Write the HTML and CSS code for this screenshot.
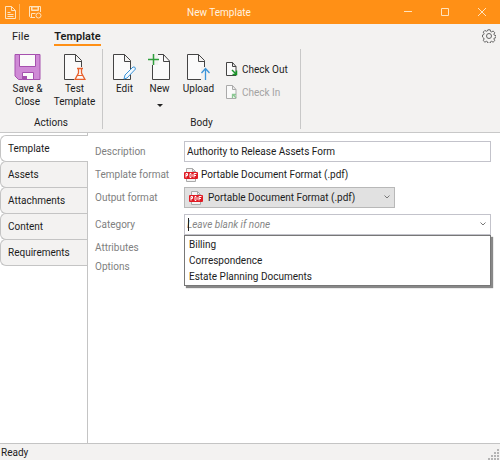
FILE: index.html
```html
<!DOCTYPE html>
<html lang="en">
<head>
<meta charset="utf-8">
<title>New Template</title>
<link rel="stylesheet" href="styles.css">
</head>
<body>
<header class="titlebar">
  <div class="quick">
    <svg width="11" height="14" viewBox="0 0 11 14"><path d="M.5 1.5h6l4 4v8H.5zM6.500 1.500v4h4M2.500 7.500h3M2.500 9.500h6M2.500 11.500h6"/></svg>
    <span class="quick-line"></span>
    <button class="quick-save" aria-label="Save"><svg width="14" height="14" viewBox="0 0 14 14"><path d="M7 12.500H2.500l-1-1v-10h11V7M3.500 1.500v4h7v-4M3.500 12.500v-4h4"/><path d="M4 2h6v3H4z"/><circle cx="10.500" cy="10.500" r="2.500"/></svg></button>
  </div>
  <h1 class="title">New Template</h1>
  <div class="window-buttons">
    <button aria-label="Minimize"><svg width="10" height="10" viewBox="0 0 10 10"><path d="M1 4.500h8"/></svg></button>
    <button aria-label="Maximize"><svg width="10" height="10" viewBox="0 0 10 10"><path d="M1.500 1.500h7v7h-7z"/></svg></button>
    <button aria-label="Close"><svg width="10" height="10" viewBox="0 0 10 10"><path d="M1 1l8 8M9 1l-8 8"/></svg></button>
  </div>
</header>

<nav class="menu">
  <button class="menu-item">File</button>
  <button class="menu-item active">Template</button>
  <button class="settings" aria-label="Settings"><svg width="14" height="14" viewBox="0 0 14 14"><path d="M5.800.8h2.400l.4 1.700 1 .4 1.500-.9 1.700 1.700-.9 1.500.4 1 1.700.4v2l-1.700.4-.4 1 .9 1.500-1.700 1.700-1.500-.9-1 .4-.4 1.500H5.800l-.4-1.500-1-.4-1.500.9-1.700-1.700.9-1.500-.4-1L.5 8V6l1.200-.4.4-1-.9-1.500L2.900 1.400l1.500.9 1-.4z"/><circle cx="7" cy="7" r="2.500"/></svg></button>
</nav>

<div class="ribbon">
  <section class="group">
    <div class="tools">
      <button class="tool wide">
        <svg width="27" height="26" viewBox="0 0 27 26"><path d="M1 .5h25v25H4.500L1 22z" fill="#cf8ad6" stroke="#a550ae"/><path d="M5.500.5h16v12h-16z" fill="#fafafa" stroke="#a550ae"/><path d="M8.500 25.500v-7h11v7z" fill="#fafafa" stroke="#a550ae"/><path d="M9 22h4v3H9z" fill="#a550ae"/></svg>
        <span>Save &amp;<br>Close</span>
      </button>
      <button class="tool wide">
        <svg width="23" height="26" viewBox="0 0 23 26"><path d="M11 25.500H1.500V.5h11l6 6V13M12.500.5v7h6" fill="#fafafa" stroke="#444"/><path d="M14 14.500h6M15.500 14.500v4.500l-3.500 6.500h10L18.500 19v-4.500" fill="#fafafa" stroke="#e8602c" stroke-width="1.300"/><path d="M14 21.500h6" stroke="#e8602c"/></svg>
        <span>Test<br>Template</span>
      </button>
    </div>
    <h2 class="group-name">Actions</h2>
  </section>
  <section class="group">
    <div class="tools">
      <button class="tool">
        <svg width="23" height="26" viewBox="0 0 23 26"><path d="M.5.5h11l6 6v19H.5zM11.500.5v7h6" fill="#fafafa" stroke="#444"/><path d="M11 25l1-4 8-8q2-1 2.500 2L14 24z" fill="#f2f9ff" stroke="#3b94d9"/></svg>
        <span>Edit</span>
      </button>
      <button class="tool">
        <svg width="23" height="26" viewBox="0 0 23 26"><path d="M4.500 2.500V25.500h17V7l-6-6.500H9M15.500.5v7h6" fill="#fafafa" stroke="#444"/><path d="M0 0h10v11H0z" fill="#f3f2f1"/><path d="M5.500 0v11M0 5.500h11" stroke="#2f9e3c" stroke-width="1.500"/></svg>
        <span>New</span>
        <i class="caret"></i>
      </button>
      <button class="tool upload">
        <svg width="25" height="26" viewBox="0 0 25 26"><path d="M16 25.500H1.500V.5h11l6 6V15M12.500.5v7h6" fill="#fafafa" stroke="#444"/><path d="M15 13h9v13h-9z" fill="#f3f2f1"/><path d="M19.500 26V15M15.500 19l4-4.500 4 4.500" fill="none" stroke="#3b94d9" stroke-width="1.300"/></svg>
        <span>Upload</span>
      </button>
      <div class="checks">
        <button class="check">
          <svg width="12" height="14" viewBox="0 0 12 14"><path d="M.5.500h6l3.500 4v9H.5zM6.500.500v4H10" fill="#fafafa" stroke="#444"/><path d="M6 8l4 4M10.500 8.500v4h-4" fill="none" stroke="#189428" stroke-width="1.500"/></svg>
          Check Out
        </button>
        <button class="check" disabled>
          <svg width="12" height="14" viewBox="0 0 12 14"><path d="M.5.500h6l3.500 4v9H.5zM6.500.500v4H10" fill="#fafafa" stroke="#aaa"/><path d="M10 13L7 9.500M6.500 13V9.500H10" fill="none" stroke="#8cc894" stroke-width="1.300"/></svg>
          Check In
        </button>
      </div>
    </div>
    <h2 class="group-name">Body</h2>
  </section>
</div>

<div class="content">
  <nav class="side">
    <button class="side-tab active">Template</button>
    <button class="side-tab">Assets</button>
    <button class="side-tab">Attachments</button>
    <button class="side-tab">Content</button>
    <button class="side-tab">Requirements</button>
  </nav>
  <main class="form">
    <div class="row">
      <label for="description">Description</label>
      <input class="box" id="description" value="Authority to Release Assets Form">
    </div>
    <div class="row plain">
      <span class="name">Template format</span>
      <span class="format"><svg class="pdf" width="14" height="14" viewBox="0 0 14 14"><path d="M2.500.5h6l3 3v10h-9z" fill="#f4f4f4" stroke="#aaa"/><path d="M8.500.5v3h3" fill="none" stroke="#aaa"/><rect y="4" width="14" height="7" rx="1" fill="#e01b24"/><path d="M2 9.500v-4h1.500v2H2M6 5.500v4h1l1-1v-2l-1-1zM10 9.500v-4h2.500M10 7.500h2" fill="none" stroke="#fff"/></svg>Portable Document Format (.pdf)</span>
    </div>
    <div class="row spaced">
      <label for="output">Output format</label>
      <div class="picker">
        <svg class="pdf picker-icon" width="14" height="14" viewBox="0 0 14 14"><path d="M2.500.5h6l3 3v10h-9z" fill="#f4f4f4" stroke="#aaa"/><path d="M8.500.5v3h3" fill="none" stroke="#aaa"/><rect y="4" width="14" height="7" rx="1" fill="#e01b24"/><path d="M2 9.500v-4h1.500v2H2M6 5.500v4h1l1-1v-2l-1-1zM10 9.500v-4h2.500M10 7.500h2" fill="none" stroke="#fff"/></svg>
        <select id="output"><option>Portable Document Format (.pdf)</option></select>
        <svg class="chevron" width="6" height="4" viewBox="0 0 6 4"><path d="M.5.500L3 3 5.500.500"/></svg>
      </div>
    </div>
    <div class="row">
      <label for="category">Category</label>
      <div class="combo">
        <input class="box" id="category" placeholder="Leave blank if none" role="combobox" aria-expanded="true" aria-controls="categories">
        <span class="cursor"></span>
        <svg class="chevron" width="6" height="4" viewBox="0 0 6 4"><path d="M.5.500L3 3 5.500.500"/></svg>
        <ul class="options" id="categories" role="listbox">
          <li role="option">Billing</li>
          <li role="option">Correspondence</li>
          <li role="option">Estate Planning Documents</li>
        </ul>
      </div>
    </div>
    <div class="row plain"><span class="name">Attributes</span></div>
    <div class="row short"><span class="name">Options</span></div>
  </main>
</div>

<footer class="status">
  <span>Ready</span>
  <svg class="grip" width="12" height="12" viewBox="0 0 12 12"><path d="M9 1h2v2H9zM6 4h2v2H6zM9 4h2v2H9zM3 7h2v2H3zM6 7h2v2H6zM9 7h2v2H9zM0 10h2v2H0zM3 10h2v2H3zM6 10h2v2H6zM9 10h2v2H9z"/></svg>
</footer>
</body>
</html>
```

FILE: styles.css
```css
* {
  box-sizing: border-box;
}

body {
  margin: 0;
  min-height: 100vh;
  display: flex;
  flex-direction: column;
  background: #fff;
  color: #1c1c1c;
  font: 10px/13px Roboto, "Noto Sans", sans-serif;
}

button,
input,
select {
  font: inherit;
  color: inherit;
  margin: 0;
  padding: 0;
  border: 0;
  border-radius: 0;
  background: none;
}

h1,
h2 {
  margin: 0;
  font: inherit;
}

svg {
  display: block;
  flex: none;
}

/* Title bar */
.titlebar {
  display: grid;
  grid-template-columns: 1fr auto 1fr;
  align-items: center;
  height: 24px;
  background: #ff9016;
  color: #fff3e0;
}

.titlebar svg {
  fill: none;
  stroke: #ffe3bd;
}

.quick {
  display: flex;
  align-items: center;
  padding-left: 5px;
}

.quick-line {
  width: 1px;
  height: 16px;
  margin: 0 8px 0 3px;
  background: #ffb865;
}

.title {
  padding-right: 62px;
}

.window-buttons {
  display: flex;
  justify-content: flex-end;
}

.window-buttons button {
  display: flex;
  justify-content: center;
  width: 37px;
}

/* Menu */
.menu {
  display: flex;
  align-items: center;
  height: 24px;
  padding: 0 4px 0 12px;
  background: #f3f2f1;
}

.menu-item {
  height: 20px;
  padding-top: 2px;
  border-bottom: 2px solid transparent;
  font-size: 11px;
}

.menu-item.active {
  margin-left: 25px;
  border-color: #ff9016;
  font-weight: 600;
}

.settings {
  margin-left: auto;
}

.settings svg {
  fill: none;
  stroke: #666;
}

/* Ribbon */
.ribbon {
  display: flex;
  height: 85px;
  padding: 1px 0 3px;
  background: #f3f2f1;
  border-bottom: 1px solid #c8c8c8;
}

.group {
  display: flex;
  flex-direction: column;
  justify-content: space-between;
  padding: 5px 4px 0;
  border-right: 1px solid #c8c8c8;
}

.tools {
  display: flex;
}

.tool {
  display: flex;
  flex-direction: column;
  align-items: center;
  width: 35px;
}

.tool span {
  margin-top: 2px;
}

.tool.wide {
  width: 47px;
}

.tool.upload {
  width: 43px;
}

.caret {
  margin-top: 9px;
  border: 3px solid transparent;
  border-top-color: #222;
  border-bottom: 0;
}

.checks {
  display: flex;
  flex-direction: column;
  gap: 9px;
  width: 76px;
  padding: 8px 0 0 6px;
}

.check {
  display: flex;
  align-items: center;
  gap: 4px;
  height: 14px;
}

.check:disabled {
  color: #a3a3a3;
}

.group-name {
  text-align: center;
}

/* Body */
.content {
  display: flex;
  flex: 1;
}

.side {
  width: 88px;
  padding-top: 2px;
  border-right: 1px solid #c4c4c4;
}

.side-tab {
  display: block;
  width: 100%;
  height: 27px;
  margin-bottom: -1px;
  padding-left: 7px;
  text-align: left;
  background: #f3f2f1;
  border: 1px solid #c4c4c4;
  border-right: 0;
  border-radius: 6px 0 0 6px;
}

.side-tab.active {
  width: 88px;
  position: relative;
  background: #fff;
}

.form {
  flex: 1;
  padding: 8px 9px 0 7px;
}

.row {
  display: flex;
  align-items: center;
  height: 21px;
}

.row.plain {
  height: 25px;
}

.row.spaced {
  margin-bottom: 6px;
}

.row.short {
  height: 13px;
}

.row label,
.name {
  width: 89px;
  flex: none;
  color: #808080;
}

.box {
  flex: 1;
  width: 100%;
  height: 21px;
  padding: 0 2px;
  border: 1px solid #c3c3cb;
  background: #fff;
}

.format {
  display: flex;
  align-items: center;
  gap: 3px;
}

.picker,
.combo {
  position: relative;
}

.combo {
  flex: 1;
}

.picker select {
  display: block;
  appearance: none;
  width: 211px;
  height: 21px;
  padding-left: 23px;
  border: 1px solid #b8b8b8;
  background: #e1e1e1;
}

.picker-icon {
  position: absolute;
  left: 5px;
  top: 4px;
}

.chevron {
  position: absolute;
  right: 5px;
  top: 8px;
  fill: none;
  stroke: #777;
}

.combo .box {
  display: block;
  outline: 0;
}

.box::placeholder {
  color: #858585;
  font-style: italic;
  opacity: 1;
}

.cursor {
  position: absolute;
  left: 4px;
  top: 4px;
  width: 1px;
  height: 13px;
  background: #222;
}

.options {
  position: absolute;
  top: 100%;
  left: 0;
  right: 0;
  margin: 0;
  padding: 1px 4px 0;
  list-style: none;
  background: #fff;
  border: 1px solid #777;
  box-shadow: 2px 2px 1px #888;
}

.options li {
  height: 16px;
  line-height: 16px;
}

/* Status bar */
.status {
  display: flex;
  justify-content: space-between;
  height: 17px;
  padding: 2px 0 0 1px;
  background: #f3f2f1;
  border-top: 1px solid #c4c4c4;
}

.grip {
  align-self: flex-end;
  fill: #b4b4b4;
}
```
